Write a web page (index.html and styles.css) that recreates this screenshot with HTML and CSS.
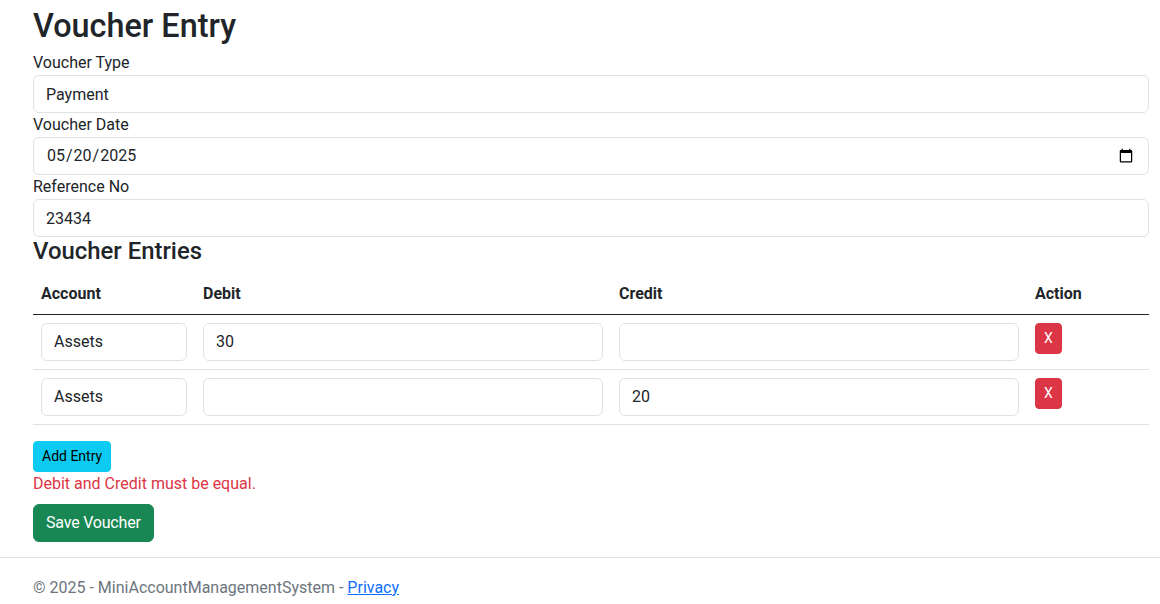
FILE: index.html
```html
<!DOCTYPE html>
<html lang="en">
<head>
<meta charset="utf-8">
<title>Voucher Entry</title>
<link rel="stylesheet" href="styles.css">
</head>
<body>
<main class="page">
  <h2 class="title">Voucher Entry</h2>
  <form class="form">
    <div class="field">
      <label class="label">Voucher Type</label>
      <input class="control" type="text" value="Payment">
    </div>
    <div class="field">
      <label class="label">Voucher Date</label>
      <input class="control" type="date" value="2025-05-20">
    </div>
    <div class="field">
      <label class="label">Reference No</label>
      <input class="control" type="text" value="23434">
    </div>
    <h4 class="subtitle">Voucher Entries</h4>
    <table class="entries">
      <colgroup>
        <col class="col-account"><col class="col-debit"><col class="col-credit"><col class="col-action">
      </colgroup>
      <thead>
        <tr><th>Account</th><th>Debit</th><th>Credit</th><th>Action</th></tr>
      </thead>
      <tbody>
        <tr>
          <td><input class="control" type="text" value="Assets"></td>
          <td><input class="control" type="text" value="30"></td>
          <td><input class="control" type="text" value=""></td>
          <td><button type="button" class="btn btn-sm btn-danger">X</button></td>
        </tr>
        <tr>
          <td><input class="control" type="text" value="Assets"></td>
          <td><input class="control" type="text" value=""></td>
          <td><input class="control" type="text" value="20"></td>
          <td><button type="button" class="btn btn-sm btn-danger">X</button></td>
        </tr>
      </tbody>
    </table>
    <button type="button" class="btn btn-sm btn-info">Add Entry</button>
    <div class="error">Debit and Credit must be equal.</div>
    <button type="button" class="btn btn-success save">Save Voucher</button>
  </form>
</main>
<footer class="footer">
  <div class="footer-inner">&copy; 2025 - MiniAccountManagementSystem - <a href="#">Privacy</a></div>
</footer>
</body>
</html>
```

FILE: styles.css
```css
* { box-sizing: border-box; }
html, body { margin: 0; padding: 0; }
body {
  font-family: Roboto, "Liberation Sans", sans-serif;
  font-size: 16px;
  line-height: 1.5;
  color: #212529;
  background: #fff;
}
.page {
  padding: 5px 11px 15px 33px;
}
.title {
  margin: 0 0 6px;
  padding-top: 2px;
  font-size: 32.4px;
  font-weight: 500;
  line-height: 38px;
}
.form { display: flex; flex-direction: column; align-items: flex-start; }
.field { width: 100%; display: flex; flex-direction: column; }
.label { display: block; line-height: 24px; }
.control {
  display: block;
  width: 100%;
  height: 38px;
  padding: 6px 12px;
  font: inherit;
  font-size: 16px;
  line-height: 1.5;
  color: #212529;
  background: #fff;
  border: 1px solid #dee2e6;
  border-radius: 6px;
}
.subtitle {
  margin: 0 0 8px;
  font-size: 23.9px;
  font-weight: 500;
  line-height: 1.2;
}
.entries {
  width: 100%;
  table-layout: fixed;
  border-collapse: collapse;
  margin-bottom: 16px;
}
.col-account { width: 162px; }
.col-debit { width: 416px; }
.col-credit { width: 416px; }
.col-action { width: 122px; }
.entries th {
  text-align: left;
  font-weight: 700;
  padding: 8px;
  border-bottom: 1px solid #212529;
}
.entries td {
  padding: 8px;
  vertical-align: top;
  border-bottom: 1px solid #dee2e6;
}
.btn {
  display: inline-block;
  font: inherit;
  font-size: 16px;
  line-height: 1.5;
  padding: 6px 12px;
  border: 1px solid transparent;
  border-radius: 6px;
  cursor: pointer;
}
.btn-sm {
  font-size: 14px;
  padding: 4px 8px;
  border-radius: 4px;
}
.btn-danger { background: #dc3545; border-color: #dc3545; color: #fff; }
.btn-info { background: #0dcaf0; border-color: #0dcaf0; color: #000; }
.btn-success { background: #198754; border-color: #198754; color: #fff; }
.error {
  color: #dc3545;
  line-height: 24px;
}
.save { margin-top: 8px; letter-spacing: -0.2px; }
.footer {
  border-top: 1px solid #dee2e6;
  color: #6c757d;
  line-height: 60px;
}
.footer-inner { padding-left: 33px; }
.footer a { color: #0d6efd; text-decoration: underline; }
```
